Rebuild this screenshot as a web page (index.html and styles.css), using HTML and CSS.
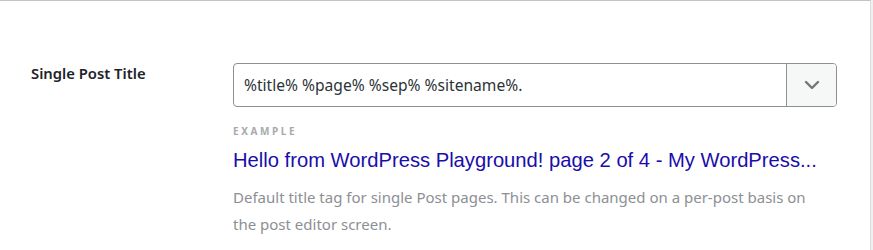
FILE: index.html
```html
<!DOCTYPE html>
<html>
<head>
<meta charset="utf-8">
<link rel="stylesheet" href="styles.css">
</head>
<body>
<div class="card">
  <div class="row">
    <div class="label">Single Post Title</div>
    <div class="field">
      <div class="select">
        <div class="value">%title% %page% %sep% %sitename%.</div>
        <div class="toggle">
          <svg width="16" height="10" viewBox="0 0 16 10"><path d="M2 2 L8 8 L14 2" fill="none" stroke="#757575" stroke-width="2.4" stroke-linecap="round" stroke-linejoin="round"/></svg>
        </div>
      </div>
      <div class="example-label">EXAMPLE</div>
      <div class="example-title">Hello from WordPress Playground! page 2 of 4 - My WordPress...</div>
      <p class="desc">Default title tag for single Post pages. This can be changed on a per-post basis on the post editor screen.</p>
    </div>
  </div>
</div>
</body>
</html>
```
FILE: styles.css
```css
html, body {
  margin: 0;
  padding: 0;
}
body {
  background: #f0f0f1;
  font-family: "Noto Sans", "Open Sans", sans-serif;
  width: 873px;
  height: 250px;
  overflow: hidden;
}
.card {
  width: 871px;
  height: 260px;
  background: #fff;
  border-top: 1px solid #c3c4c7;
  border-right: 1px solid #dcdcde;
  box-sizing: border-box;
  padding: 62px 0 0 31px;
}
.row {
  display: grid;
  grid-template-columns: 202px 604px;
}
.label {
  font-size: 14.8px;
  font-weight: 600;
  color: #1d2327;
  line-height: 20px;
}
.select {
  display: flex;
  height: 44px;
  border: 1px solid #8c8f94;
  border-radius: 4px;
  box-sizing: border-box;
  overflow: hidden;
}
.value {
  flex: 1;
  display: flex;
  align-items: center;
  padding-left: 10px;
  font-size: 15.6px;
  color: #2c3338;
}
.toggle {
  width: 49px;
  border-left: 1px solid #8c8f94;
  background: #f6f7f7;
  display: flex;
  align-items: center;
  justify-content: center;
}
.example-label {
  margin-top: 17px;
  font-size: 10px;
  font-weight: 700;
  letter-spacing: 2.6px;
  color: #a7aaad;
  line-height: 14px;
}
.example-title {
  margin-top: 9px;
  font-family: "Liberation Sans", Arial, sans-serif;
  font-size: 20.2px;
  color: #1a0dab;
  line-height: 26px;
}
.desc {
  margin: 11px 0 0;
  font-size: 15px;
  line-height: 27px;
  color: #8c8f94;
  width: 590px;
}
```
